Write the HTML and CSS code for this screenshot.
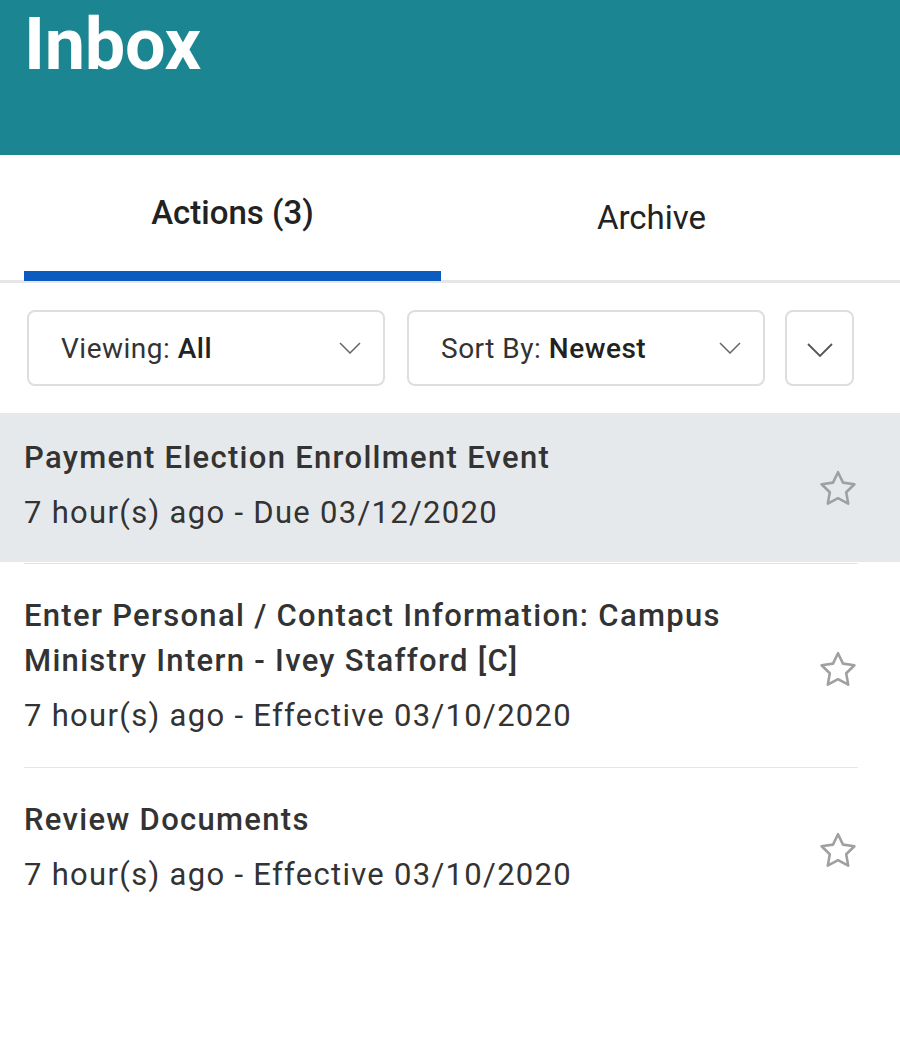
FILE: index.html
```html
<!DOCTYPE html>
<html lang="en">
<head>
<meta charset="utf-8">
<title>Inbox</title>
<link rel="stylesheet" href="styles.css">
</head>
<body>
<header class="header">
  <h1 class="title">Inbox</h1>
</header>
<nav class="tabs">
  <div class="tab tab-active">Actions (3)</div>
  <div class="tab tab-archive">Archive</div>
</nav>
<div class="filters">
  <div class="select select-view">
    <span class="select-label">Viewing:&nbsp;<b>All</b></span>
    <svg class="chev" viewBox="0 0 22 12" width="22" height="12"><path d="M1 1l10 10 10-10" fill="none" stroke="#666" stroke-width="1.5"/></svg>
  </div>
  <div class="select select-sort">
    <span class="select-label">Sort By:&nbsp;<b>Newest</b></span>
    <svg class="chev" viewBox="0 0 22 12" width="22" height="12"><path d="M1 1l10 10 10-10" fill="none" stroke="#666" stroke-width="1.5"/></svg>
  </div>
  <div class="select select-more">
    <svg class="chev-lg" viewBox="0 0 26 14" width="26" height="14"><path d="M1 1l12 12 12-12" fill="none" stroke="#555" stroke-width="1.8"/></svg>
  </div>
</div>
<ul class="list">
  <li class="item item-selected">
    <div class="item-inner">
      <div class="item-text">
        <div class="item-title">Payment Election Enrollment Event</div>
        <div class="item-sub">7 hour(s) ago - Due 03/12/2020</div>
      </div>
      <svg class="star" viewBox="0 0 24 24" width="48" height="48"><path d="M12 3.6l2.5 5.2 5.7.8-4.1 4 1 5.7L12 16.6l-5.1 2.7 1-5.7-4.1-4 5.7-.8z" fill="none" stroke="#a0a0a0" stroke-width="1.3" stroke-linejoin="round"/></svg>
    </div>
  </li>
  <li class="item">
    <div class="item-inner">
      <div class="item-text">
        <div class="item-title">Enter Personal / Contact Information: Campus Ministry Intern - Ivey Stafford [C]</div>
        <div class="item-sub">7 hour(s) ago - Effective 03/10/2020</div>
      </div>
      <svg class="star" viewBox="0 0 24 24" width="48" height="48"><path d="M12 3.6l2.5 5.2 5.7.8-4.1 4 1 5.7L12 16.6l-5.1 2.7 1-5.7-4.1-4 5.7-.8z" fill="none" stroke="#a0a0a0" stroke-width="1.3" stroke-linejoin="round"/></svg>
    </div>
  </li>
  <li class="item">
    <div class="item-inner">
      <div class="item-text">
        <div class="item-title">Review Documents</div>
        <div class="item-sub">7 hour(s) ago - Effective 03/10/2020</div>
      </div>
      <svg class="star" viewBox="0 0 24 24" width="48" height="48"><path d="M12 3.6l2.5 5.2 5.7.8-4.1 4 1 5.7L12 16.6l-5.1 2.7 1-5.7-4.1-4 5.7-.8z" fill="none" stroke="#a0a0a0" stroke-width="1.3" stroke-linejoin="round"/></svg>
    </div>
  </li>
</ul>
</body>
</html>
```

FILE: styles.css
```css
* { box-sizing: border-box; }
html, body { margin: 0; padding: 0; background: #fff; }
body {
  font-family: Roboto, "Liberation Sans", Arial, sans-serif;
  color: #333;
  width: 900px;
}
.header {
  background: #1b8591;
  height: 155px;
  padding: 0 24px;
}
.title {
  margin: 0;
  color: #fff;
  font-size: 72px;
  font-weight: 700;
  line-height: 90px;
  letter-spacing: -0.3px;
}
.tabs {
  display: flex;
  padding: 0 40px 0 24px;
  border-bottom: 3px solid #e4e6e8;
  height: 128px;
}
.tab {
  flex: 1;
  text-align: center;
  font-size: 33px;
  color: #222;
  padding-top: 38px;
}
.tab-active {
  font-weight: 500;
  border-bottom: 10px solid #0b5cbe;
  margin-bottom: -1px;
  margin-right: 2px;
}
.tab-archive { padding-top: 43px; }
.filters {
  display: flex;
  gap: 22px;
  padding: 27px 0 0 27px;
  height: 130px;
}
.select {
  height: 76px;
  border: 2px solid #dcdfe2;
  border-radius: 8px;
  display: flex;
  align-items: center;
  justify-content: space-between;
  font-size: 28px;
  letter-spacing: 0.5px;
  color: #333;
}
.select b { font-weight: 500; color: #222; }
.select-view { width: 358px; padding: 0 22px 0 32px; }
.select-sort { width: 358px; padding: 0 22px 0 32px; }
.select-more { width: 69px; justify-content: center; margin-left: -2px; }
.chev { display: block; }
.chev-lg { display: block; margin-top: 4px; }
.list { list-style: none; margin: 0; padding: 0; }
.item { padding: 0 38px 0 24px; }
.item-selected { background: #e6e9ec; }
.item-inner {
  display: flex;
  align-items: center;
  justify-content: space-between;
  padding: 29px 0 28px;
}
.item-selected .item-inner { padding: 22px 0 27px; }
.item + .item .item-inner { border-top: 1px solid #e3e5e8; margin-right: 4px; }
.item + .item { margin-top: 1px; }
.item-text { max-width: 740px; }
.item-title {
  font-size: 31px;
  font-weight: 500;
  line-height: 45px;
  letter-spacing: 1.3px;
  color: #333;
}
.item-sub {
  font-size: 31px;
  line-height: 45px;
  letter-spacing: 1.3px;
  margin-top: 10px;
  color: #333;
}
.star { flex: none; margin-top: 4px; margin-bottom: -4px; }
.item + .item .star { margin-right: -4px; }
```
